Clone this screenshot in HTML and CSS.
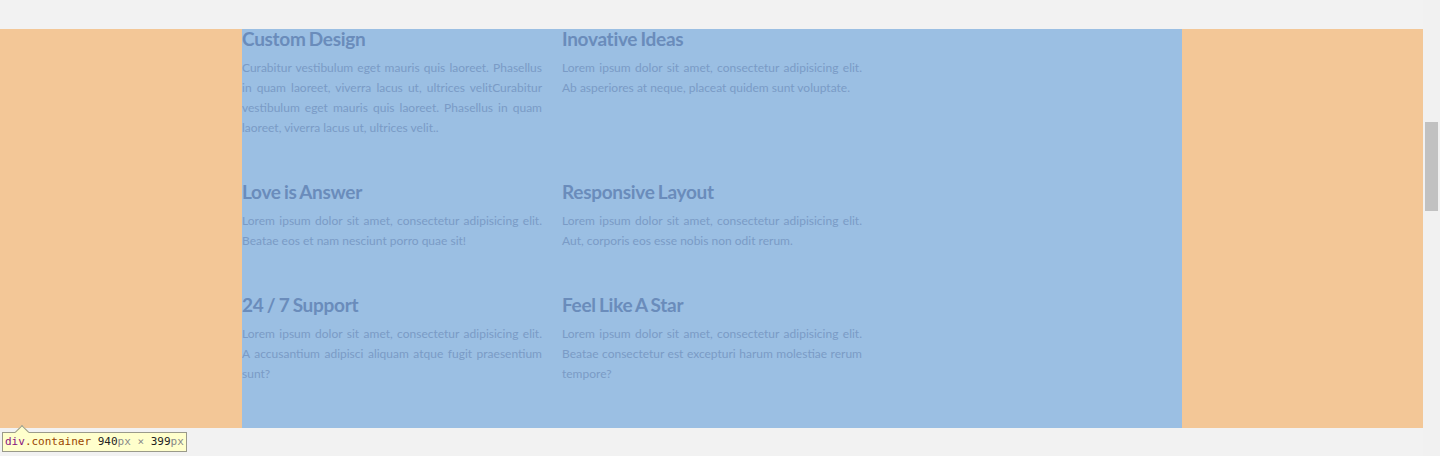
FILE: index.html
```html
<!DOCTYPE html>
<html>
<head>
<meta charset="utf-8">
<link rel="stylesheet" href="styles.css">
</head>
<body>
<div class="screen">
  <div class="page">
    <div class="band">
      <div class="container">
        <div class="feature">
          <h3 class="feature-title">Custom Design</h3>
          <p class="feature-text">Curabitur vestibulum eget mauris quis laoreet. Phasellus in quam laoreet, viverra lacus ut, ultrices velitCurabitur vestibulum eget mauris quis laoreet. Phasellus in quam laoreet, viverra lacus ut, ultrices velit..</p>
        </div>
        <div class="feature">
          <h3 class="feature-title">Inovative Ideas</h3>
          <p class="feature-text">Lorem ipsum dolor sit amet, consectetur adipisicing elit. Ab asperiores at neque, placeat quidem sunt voluptate.</p>
        </div>
        <div class="feature">
          <h3 class="feature-title">Love is Answer</h3>
          <p class="feature-text">Lorem ipsum dolor sit amet, consectetur adipisicing elit. Beatae eos et nam nesciunt porro quae sit!</p>
        </div>
        <div class="feature">
          <h3 class="feature-title">Responsive Layout</h3>
          <p class="feature-text">Lorem ipsum dolor sit amet, consectetur adipisicing elit. Aut, corporis eos esse nobis non odit rerum.</p>
        </div>
        <div class="feature">
          <h3 class="feature-title">24 / 7 Support</h3>
          <p class="feature-text">Lorem ipsum dolor sit amet, consectetur adipisicing elit. A accusantium adipisci aliquam atque fugit praesentium sunt?</p>
        </div>
        <div class="feature">
          <h3 class="feature-title">Feel Like A Star</h3>
          <p class="feature-text">Lorem ipsum dolor sit amet, consectetur adipisicing elit. Beatae consectetur est excepturi harum molestiae rerum tempore?</p>
        </div>
      </div>
    </div>
  </div>
  <div class="scrollbar">
    <div class="scroll-thumb"></div>
  </div>
</div>
<div class="inspect-tip"><span class="tag">div</span><span class="cls">.container</span> <span class="num">940</span><span class="unit">px</span> <span class="unit">×</span> <span class="num">399</span><span class="unit">px</span></div>
</body>
</html>
```

FILE: styles.css
```css
html, body {
  margin: 0;
  padding: 0;
}
body {
  background: #f2f2f2;
  width: 1440px;
  height: 456px;
  overflow: hidden;
  position: relative;
}
.screen {
  display: flex;
  width: 1440px;
  height: 456px;
}
.page {
  width: 1423px;
  padding-top: 29px;
}
.band {
  background: #f3c797;
  height: 399px;
  display: flex;
  justify-content: center;
}
.container {
  width: 940px;
  margin-left: 1px;
  background: #9bbfe3;
  display: grid;
  grid-template-columns: 300px 300px;
  column-gap: 20px;
  row-gap: 44px;
  align-content: start;
}
.feature-title {
  margin: 0;
  font-family: Lato, "Liberation Sans", sans-serif;
  font-weight: 700;
  font-size: 19px;
  line-height: 20px;
  color: #6a8cbb;
  letter-spacing: -0.3px;
  word-spacing: -1px;
}
.feature-text {
  margin: 9px 0 0;
  font-family: Lato, "Liberation Sans", sans-serif;
  font-size: 12px;
  line-height: 20px;
  color: #7a9bc6;
  text-align: justify;
}
.scrollbar {
  width: 17px;
  background: #f1f1f1;
}
.scroll-thumb {
  margin: 122px 0 0 2px;
  width: 13px;
  height: 89px;
  background: #c1c1c1;
}
.inspect-tip {
  position: absolute;
  left: 2px;
  top: 432px;
  height: 18px;
  padding: 0 2px;
  background: #ffffcc;
  border: 1px solid #9a9a8a;
  font-family: "DejaVu Sans Mono", "Liberation Mono", monospace;
  font-size: 11px;
  line-height: 18px;
  color: #222;
  white-space: nowrap;
}
.inspect-tip::before {
  content: "";
  position: absolute;
  left: 14px;
  top: -6px;
  width: 9px;
  height: 9px;
  background: #ffffcc;
  border-left: 1px solid #9a9a8a;
  border-top: 1px solid #9a9a8a;
  transform: rotate(45deg);
}
.tag { color: #881280; position: relative; }
.cls { color: #994500; position: relative; }
.num { color: #222; }
.unit { color: #888; }
```
